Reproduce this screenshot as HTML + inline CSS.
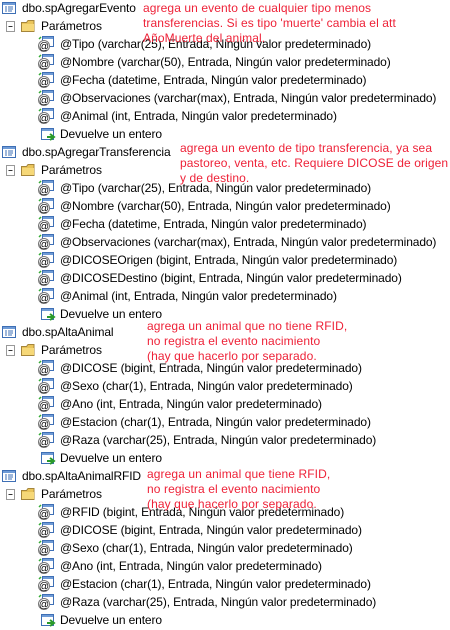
<!DOCTYPE html>
<html><head><meta charset="utf-8"><style>
*{margin:0;padding:0}
body{width:450px;height:630px;overflow:hidden;background:#fff;position:relative;font-family:"Liberation Sans","DejaVu Sans",sans-serif;font-size:12px;color:#000}
.r{position:absolute;height:18px;line-height:18px;white-space:nowrap;letter-spacing:-0.12px}
.a{position:absolute;color:#ee2238;font-size:12px;line-height:15px;letter-spacing:0.1px;white-space:nowrap}
svg{position:absolute}
</style></head><body>
<svg width="0" height="0" style="position:absolute">
<defs>
<g id="sp"><rect x="0.5" y="1.5" width="13" height="11" fill="#fff" stroke="#3e6fb5"/><rect x="1" y="2" width="12" height="2" fill="#6f9bd6"/><path d="M3 6h2M6 6h5M3 8h2M6 8h5M3 10h2M6 10h4" stroke="#3e6fb5"/></g>
<g id="pm"><rect x="4.5" y="0.5" width="11" height="10" fill="#fff" stroke="#3e6fb5"/><rect x="5" y="1" width="10" height="2" fill="#6f9bd6"/><circle cx="6" cy="10" r="5.5" fill="#fff" stroke="#777"/><text x="6" y="13.5" font-size="10" text-anchor="middle" font-family="Liberation Sans" fill="#000">@</text><path d="M1 3l2 -2" stroke="#3a3" stroke-width="1.5"/></g>
<g id="rt"><rect x="0.5" y="1.5" width="12" height="11" fill="#fff" stroke="#3e6fb5"/><rect x="1" y="2" width="11" height="2" fill="#6f9bd6"/><path d="M6 10h7M9 7l4 3-4 3" stroke="#2a9a2a" stroke-width="2" fill="none"/></g>
<g id="fd"><rect x="0.5" y="0.5" width="8" height="10" fill="#fff" stroke="#999"/><path d="M2.5 5.5h4" stroke="#333"/></g>
<g id="fo"><path d="M0.5 3.5h5l1.5-2h6v11h-12.5z" fill="#e9c45a" stroke="#a5853a"/><rect x="1" y="5" width="12" height="7" fill="#f6d878"/></g>
</defs></svg>
<div id="c"></div>
<script>
var rows=[
["s","dbo.spAgregarEvento"],["p"],["a","@Tipo (varchar(25), Entrada, Ningún valor predeterminado)"],["a","@Nombre (varchar(50), Entrada, Ningún valor predeterminado)"],["a","@Fecha (datetime, Entrada, Ningún valor predeterminado)"],["a","@Observaciones (varchar(max), Entrada, Ningún valor predeterminado)"],["a","@Animal (int, Entrada, Ningún valor predeterminado)"],["d"],
["s","dbo.spAgregarTransferencia"],["p"],["a","@Tipo (varchar(25), Entrada, Ningún valor predeterminado)"],["a","@Nombre (varchar(50), Entrada, Ningún valor predeterminado)"],["a","@Fecha (datetime, Entrada, Ningún valor predeterminado)"],["a","@Observaciones (varchar(max), Entrada, Ningún valor predeterminado)"],["a","@DICOSEOrigen (bigint, Entrada, Ningún valor predeterminado)"],["a","@DICOSEDestino (bigint, Entrada, Ningún valor predeterminado)"],["a","@Animal (int, Entrada, Ningún valor predeterminado)"],["d"],
["s","dbo.spAltaAnimal"],["p"],["a","@DICOSE (bigint, Entrada, Ningún valor predeterminado)"],["a","@Sexo (char(1), Entrada, Ningún valor predeterminado)"],["a","@Ano (int, Entrada, Ningún valor predeterminado)"],["a","@Estacion (char(1), Entrada, Ningún valor predeterminado)"],["a","@Raza (varchar(25), Entrada, Ningún valor predeterminado)"],["d"],
["s","dbo.spAltaAnimalRFID"],["p"],["a","@RFID (bigint, Entrada, Ningún valor predeterminado)"],["a","@DICOSE (bigint, Entrada, Ningún valor predeterminado)"],["a","@Sexo (char(1), Entrada, Ningún valor predeterminado)"],["a","@Ano (int, Entrada, Ningún valor predeterminado)"],["a","@Estacion (char(1), Entrada, Ningún valor predeterminado)"],["a","@Raza (varchar(25), Entrada, Ningún valor predeterminado)"],["d"]];
var h="";
rows.forEach(function(r,i){var y=-1+18*i;
if(r[0]=="s"){h+='<svg style="left:2px;top:'+(y+2)+'px" width="15" height="15"><use href="#sp"/></svg><div class="r" style="left:22px;top:'+y+'px">'+r[1]+'</div>';}
else if(r[0]=="p"){h+='<svg style="left:6px;top:'+(y+4)+'px" width="10" height="12"><use href="#fd"/></svg><svg style="left:21px;top:'+(y+2)+'px" width="15" height="14"><use href="#fo"/></svg><div class="r" style="left:41px;top:'+y+'px">Parámetros</div>';}
else if(r[0]=="a"){h+='<svg style="left:38px;top:'+(y+1)+'px" width="17" height="17"><use href="#pm"/></svg><div class="r" style="left:60px;top:'+y+'px">'+r[1]+'</div>';}
else{h+='<svg style="left:41px;top:'+(y+2)+'px" width="15" height="15"><use href="#rt"/></svg><div class="r" style="left:60px;top:'+y+'px">Devuelve un entero</div>';}
});
document.getElementById("c").innerHTML=h;
</script>
<div class="a" style="left:143px;top:1px">agrega un evento de cualquier tipo menos<br>transferencias. Si es tipo 'muerte' cambia el att<br>AñoMuerte del animal.</div>
<div class="a" style="left:180px;top:141px">agrega un evento de tipo transferencia, ya sea<br>pastoreo, venta, etc. Requiere DICOSE de origen<br>y de destino.</div>
<div class="a" style="left:147px;top:319px">agrega un animal que no tiene RFID,<br>no registra el evento nacimiento<br>(hay que hacerlo por separado.</div>
<div class="a" style="left:147px;top:467px">agrega un animal que tiene RFID,<br>no registra el evento nacimiento<br>(hay que hacerlo por separado.</div>
</body></html>
